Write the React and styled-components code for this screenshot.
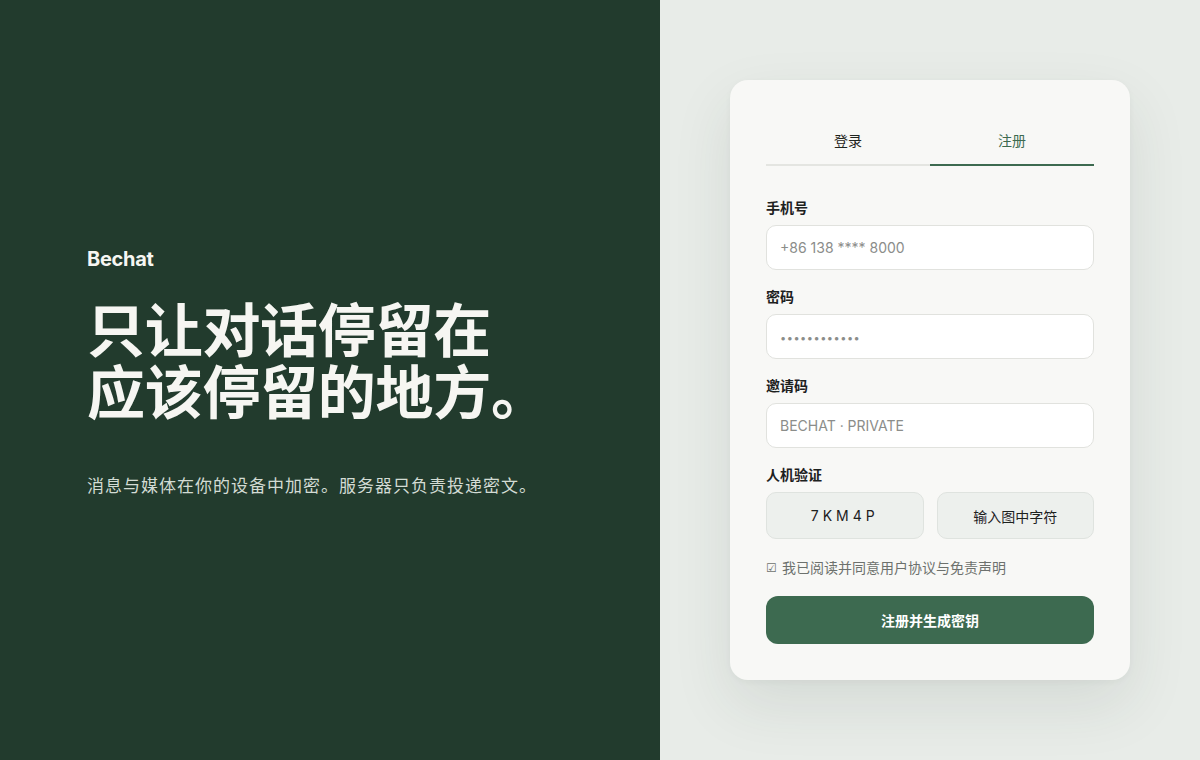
import React, { useState } from 'react';
import styled, { createGlobalStyle } from 'styled-components';

const GlobalStyle = createGlobalStyle`
  html, body {
    margin: 0;
    padding: 0;
  }
  body {
    font-family: Inter, "Noto Sans CJK SC", sans-serif;
  }
  * {
    box-sizing: border-box;
  }
`;

const Page = styled.div`
  display: flex;
  width: 100%;
  height: 760px;
`;

const Hero = styled.section`
  flex: 0 0 660px;
  background: #223b2d;
  color: #f6f6f2;
  display: flex;
  flex-direction: column;
  justify-content: center;
  padding: 0 0 16px 87px;
`;

const Brand = styled.div`
  font-family: Inter, sans-serif;
  font-weight: 700;
  font-size: 20px;
  letter-spacing: -0.3px;
  line-height: 24px;
`;

const Headline = styled.h1`
  margin: 29px 0 0;
  font-family: Inter, "Noto Sans CJK SC", sans-serif;
  font-weight: 700;
  font-size: 58px;
  line-height: 62px;
  letter-spacing: -0.3px;
`;

const Tagline = styled.p`
  margin: 50px 0 0;
  font-size: 17px;
  line-height: 24px;
  letter-spacing: 1px;
  color: #d3dcd4;
`;

const Side = styled.section`
  flex: 1;
  background: #e8ece8;
  display: flex;
  align-items: flex-start;
  padding: 80px 0 0 70px;
`;

const Card = styled.div`
  width: 400px;
  height: 600px;
  background: #f8f8f6;
  border-radius: 18px;
  padding: 36px;
  box-shadow: 0 24px 60px rgba(40, 60, 45, 0.10), 0 2px 6px rgba(40, 60, 45, 0.04);
`;

const Tabs = styled.div`
  display: flex;
  margin-bottom: 32px;
`;

const Tab = styled.button`
  flex: 1;
  height: 50px;
  border: none;
  background: transparent;
  font-family: inherit;
  font-size: 14px;
  color: ${p => (p.$active ? '#3d6a50' : '#1f2420')};
  border-bottom: ${p => (p.$active ? '2px solid #3d6a50' : '2px solid #e4e5e1')};
  cursor: pointer;
  padding: 0;
`;

const Field = styled.div`
  margin-bottom: 17px;
`;

const Label = styled.div`
  font-size: 14px;
  font-weight: 700;
  color: #1d211e;
  line-height: 20px;
  margin-bottom: 7px;
`;

const Input = styled.input`
  width: 100%;
  height: 45px;
  border: 1px solid #e1e2de;
  border-radius: 10px;
  background: #ffffff;
  padding: 0 13px;
  font-family: Inter, "Noto Sans CJK SC", sans-serif;
  font-size: 14px;
  color: #1d211e;
  outline: none;
  &::placeholder {
    color: #8b8d8a;
  }
`;

const Dots = styled(Input)`
  letter-spacing: 0.5px;
  &::placeholder {
    font-size: 11px;
  }
`;

const CaptchaRow = styled.div`
  display: grid;
  grid-template-columns: 1fr 1fr;
  gap: 13px;
`;

const CaptchaBox = styled.div`
  height: 47px;
  border: 1px solid #dfe3df;
  border-radius: 10px;
  background: #edf0ed;
  display: flex;
  align-items: center;
  justify-content: center;
  font-size: 14px;
  color: #1d211e;
  letter-spacing: ${p => (p.$spaced ? '4px' : '0')};
`;

const Agree = styled.label`
  display: flex;
  align-items: center;
  gap: 5px;
  margin-top: 20px;
  font-size: 14px;
  color: #6d716d;
  line-height: 18px;
`;

const Check = styled.span`
  font-size: 12px;
`;

const Submit = styled.button`
  width: 100%;
  height: 48px;
  margin-top: 19px;
  border: none;
  border-radius: 12px;
  background: #3d6a50;
  color: #ffffff;
  font-family: inherit;
  font-size: 14px;
  font-weight: 700;
  cursor: pointer;
`;

export default function App() {
  const [tab, setTab] = useState('register');
  return (
    <>
      <GlobalStyle />
      <Page>
        <Hero>
          <Brand>Bechat</Brand>
          <Headline>
            只让对话停留在
            <br />
            应该停留的地方。
          </Headline>
          <Tagline>消息与媒体在你的设备中加密。服务器只负责投递密文。</Tagline>
        </Hero>
        <Side>
          <Card>
            <Tabs>
              <Tab $active={tab === 'login'} onClick={() => setTab('login')}>登录</Tab>
              <Tab $active={tab === 'register'} onClick={() => setTab('register')}>注册</Tab>
            </Tabs>
            <Field>
              <Label>手机号</Label>
              <Input placeholder="+86 138 **** 8000" />
            </Field>
            <Field>
              <Label>密码</Label>
              <Dots type="password" placeholder="••••••••••••" />
            </Field>
            <Field>
              <Label>邀请码</Label>
              <Input placeholder="BECHAT · PRIVATE" />
            </Field>
            <div>
              <Label>人机验证</Label>
              <CaptchaRow>
                <CaptchaBox $spaced>7KM4P</CaptchaBox>
                <CaptchaBox>输入图中字符</CaptchaBox>
              </CaptchaRow>
            </div>
            <Agree><Check>☑</Check>我已阅读并同意用户协议与免责声明</Agree>
            <Submit>注册并生成密钥</Submit>
          </Card>
        </Side>
      </Page>
    </>
  );
}
